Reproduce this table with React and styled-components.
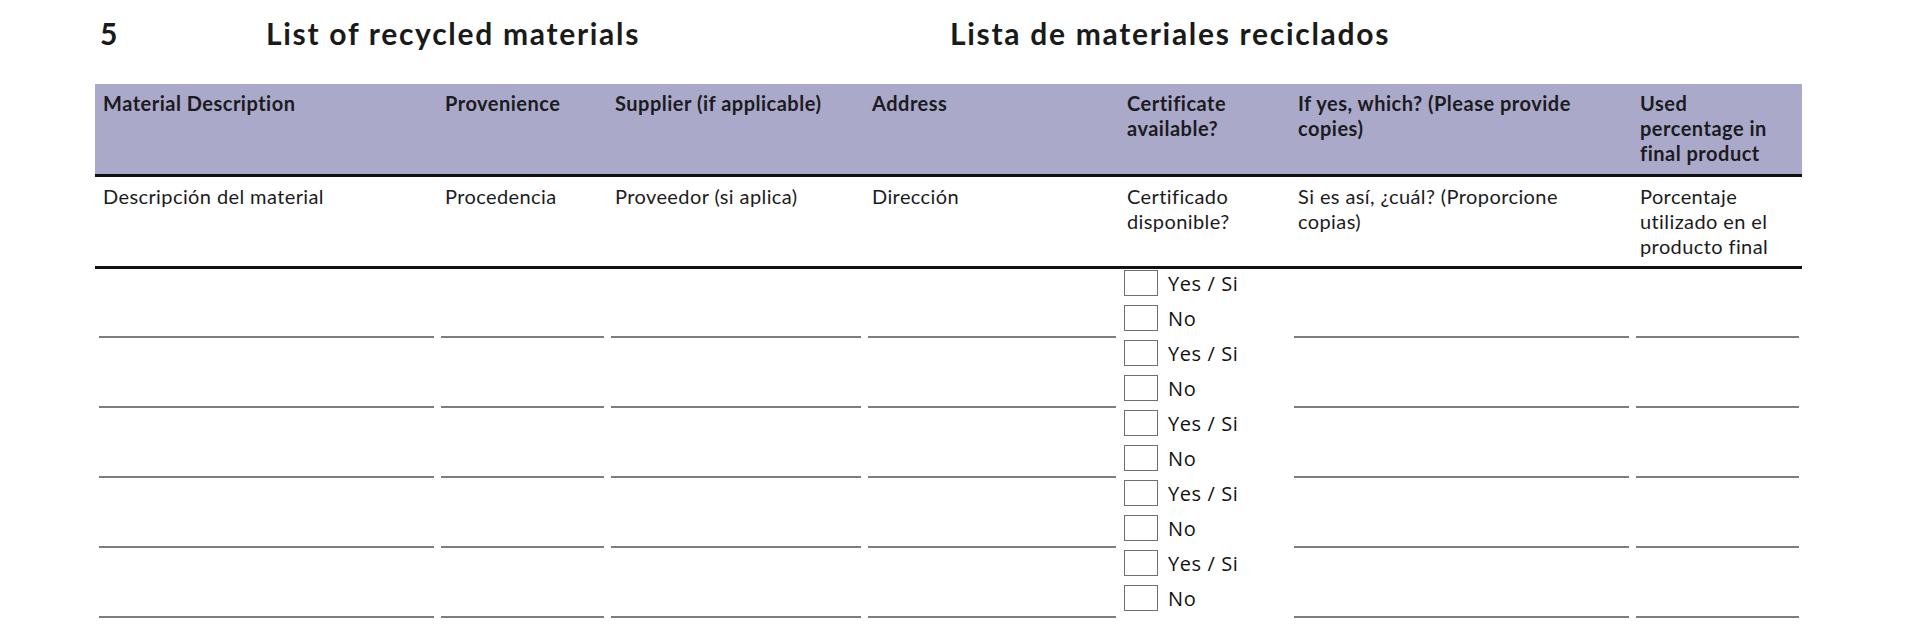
import React from "react";
import styled, { createGlobalStyle } from "styled-components";

const GlobalStyle = createGlobalStyle`
  body {
    margin: 0;
    background: #fff;
    font-family: Lato, "Open Sans", sans-serif;
    color: #1a1a1a;
  }
`

const Page = styled.div`
  width: 1920px;
  height: 639px;
  padding-left: 95px;
  box-sizing: border-box;
  overflow: hidden;
`

const TitleRow = styled.div`
  display: grid;
  grid-template-columns: 171px 684px auto;
  height: 84px;
  padding-top: 16px;
  box-sizing: border-box;
  font-size: 30px;
  line-height: 34px;
  font-weight: 700;
  letter-spacing: 1.7px;
`

const Number = styled.span`
  padding-left: 5px;
`

const Grid = styled.div`
  display: grid;
  grid-template-columns: 342px 170px 257px 255px 171px 342px 170px;
  width: 1707px;
`

const HeadRow = styled(Grid)`
  height: 93px;
  box-sizing: border-box;
  background: #aba9c9;
  border-bottom: 3px solid #111;
`

const SubRow = styled(Grid)`
  height: 92px;
  box-sizing: border-box;
  border-bottom: 3px solid #111;
`

const Cell = styled.div`
  padding: 7px 8px 0;
  font-size: 20px;
  line-height: 25px;
  letter-spacing: ${p => (p.$bold ? "0.5px" : "0.4px")};
  font-weight: ${p => (p.$bold ? 700 : 400)};
  color: #1b1b22;
`

const Block = styled(Grid)`
  height: 70px;
`

const Field = styled.div`
  display: flex;
  align-items: flex-end;
  padding: 0 3px 1px 4px;
`

const Line = styled.div`
  width: 100%;
  border-bottom: 2px solid #7d7d7d;
`

const Choices = styled.div`
  display: flex;
  flex-direction: column;
  padding-left: 5px;
`

const Choice = styled.label`
  display: flex;
  align-items: center;
  gap: 10px;
  height: 35px;
  padding-bottom: 7px;
  box-sizing: border-box;
  font-family: "Open Sans", sans-serif;
  font-size: 20px;
  letter-spacing: 0.6px;
  color: #111;
`

const Box = styled.span`
  width: 34px;
  height: 26px;
  box-sizing: border-box;
  border: 1.5px solid #6f6f6f;
  background: #fff;
`

const english = [
  ["Material Description"],
  ["Provenience"],
  ["Supplier (if applicable)"],
  ["Address"],
  ["Certificate", "available?"],
  ["If yes, which? (Please provide", "copies)"],
  ["Used", "percentage in", "final product"],
]

const spanish = [
  ["Descripción del material"],
  ["Procedencia"],
  ["Proveedor (si aplica)"],
  ["Dirección"],
  ["Certificado", "disponible?"],
  ["Si es así, ¿cuál? (Proporcione", "copias)"],
  ["Porcentaje", "utilizado en el", "producto final"],
]

function Lines({ lines }) {
  return lines.map((l, i) => (
    <React.Fragment key={i}>
      {i > 0 && <br />}
      {l}
    </React.Fragment>
  ))
}

function App() {
  const rows = [0, 1, 2, 3, 4]

  return (
    <Page>
      <GlobalStyle />
      <TitleRow>
        <Number>5</Number>
        <span>List of recycled materials</span>
        <span>Lista de materiales reciclados</span>
      </TitleRow>

      <HeadRow>
        {english.map((t, i) => (
          <Cell key={i} $bold>
            <Lines lines={t} />
          </Cell>
        ))}
      </HeadRow>

      <SubRow>
        {spanish.map((t, i) => (
          <Cell key={i}>
            <Lines lines={t} />
          </Cell>
        ))}
      </SubRow>

      {rows.map(r => (
        <Block key={r}>
          <Field><Line /></Field>
          <Field><Line /></Field>
          <Field><Line /></Field>
          <Field><Line /></Field>
          <Choices>
            <Choice><Box />Yes / Si</Choice>
            <Choice><Box />No</Choice>
          </Choices>
          <Field><Line /></Field>
          <Field><Line /></Field>
        </Block>
      ))}
    </Page>
  )
}

export default App
